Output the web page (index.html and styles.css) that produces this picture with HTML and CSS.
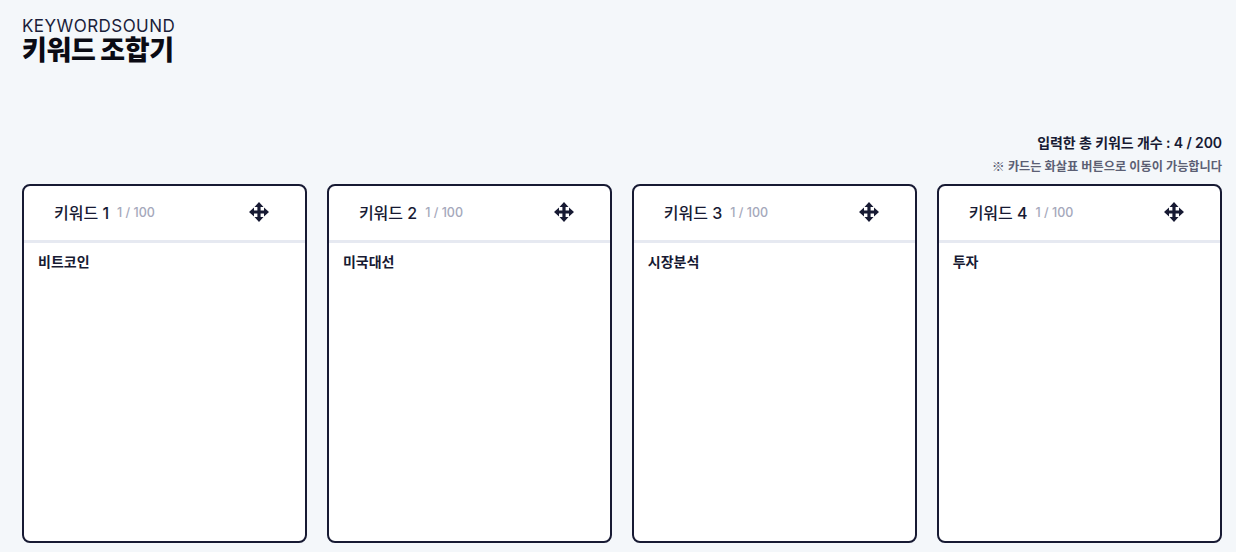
FILE: index.html
```html
<!DOCTYPE html>
<html lang="ko">
<head>
    <meta charset="UTF-8">
    <meta name="viewport" content="width=device-width, initial-scale=1.0">
    <title>키워드 조합기</title>
    <link rel="stylesheet" href="styles.css">
</head>
<body>
    <svg class="icon-defs" width="0" height="0">
        <symbol id="move" viewBox="0 0 20 20">
            <path d="M10 0 L14.5 5 H11.6 V8.4 H15 V5.5 L20 10 L15 14.5 V11.6 H11.6 V15 H14.5 L10 20 L5.5 15 H8.4 V11.6 H5 V14.5 L0 10 L5 5.5 V8.4 H8.4 V5 H5.5 Z"/>
        </symbol>
    </svg>
    <div class="header">
        <div class="brand">KEYWORDSOUND</div>
        <h1>키워드 조합기</h1>
    </div>
    <div class="summary">
        <p class="total">입력한 총 키워드 개수 : 4 / 200</p>
        <p class="hint"><span class="mark">※</span> 카드는 화살표 버튼으로 이동이 가능합니다</p>
    </div>
    <div class="cards">
        <div class="card">
            <div class="card-head">
                <span class="card-title">키워드 1</span>
                <span class="card-count">1 / 100</span>
                <button class="move-btn"><svg width="20" height="20"><use href="#move"/></svg></button>
            </div>
            <div class="card-body">비트코인</div>
        </div>
        <div class="card">
            <div class="card-head">
                <span class="card-title">키워드 2</span>
                <span class="card-count">1 / 100</span>
                <button class="move-btn"><svg width="20" height="20"><use href="#move"/></svg></button>
            </div>
            <div class="card-body">미국대선</div>
        </div>
        <div class="card">
            <div class="card-head">
                <span class="card-title">키워드 3</span>
                <span class="card-count">1 / 100</span>
                <button class="move-btn"><svg width="20" height="20"><use href="#move"/></svg></button>
            </div>
            <div class="card-body">시장분석</div>
        </div>
        <div class="card">
            <div class="card-head">
                <span class="card-title">키워드 4</span>
                <span class="card-count">1 / 100</span>
                <button class="move-btn"><svg width="20" height="20"><use href="#move"/></svg></button>
            </div>
            <div class="card-body">투자</div>
        </div>
    </div>
</body>
</html>
```

FILE: styles.css
```css
html, body {
    height: 100%;
}
body {
    font-family: 'Inter', 'Noto Sans CJK KR', sans-serif;
    background-color: #f4f7fa;
    color: #171a33;
    margin: 0;
    padding: 17px 14px 9px 22px;
    box-sizing: border-box;
    display: flex;
    flex-direction: column;
    overflow: hidden;
}
.icon-defs {
    position: absolute;
}
.header {
    height: 117px;
    flex-shrink: 0;
}
.brand {
    font-size: 17px;
    line-height: 18px;
    letter-spacing: 0.45px;
    color: #1b1e3a;
}
h1 {
    margin: 1px 0 0;
    font-size: 27px;
    line-height: 29px;
    font-weight: 900;
    letter-spacing: -0.4px;
    color: #0b0b14;
}
.summary {
    text-align: right;
    flex-shrink: 0;
}
.summary p {
    margin: 0;
}
.total {
    font-size: 14px;
    line-height: 18px;
    font-weight: 600;
    letter-spacing: -0.1px;
}
.summary .hint {
    margin-top: 6px;
    font-size: 12.2px;
    line-height: 18px;
    font-weight: 600;
    color: #5c5f74;
}
.mark {
    font-family: 'Noto Sans CJK KR', sans-serif;
    font-size: 13px;
    line-height: 1;
}
.cards {
    margin-top: 8px;
    flex: 1;
    display: grid;
    grid-template-columns: repeat(4, 1fr);
    gap: 19.5px;
}
.card {
    background: #fff;
    border: 2px solid #171a33;
    border-radius: 8px;
    display: flex;
    flex-direction: column;
}
.card-head {
    box-sizing: border-box;
    height: 57px;
    padding: 0 36px 2px 30px;
    border-bottom: 3px solid #e6e9f1;
    display: flex;
    align-items: center;
}
.card-title {
    font-size: 16px;
    font-weight: 500;
}
.card-count {
    margin-left: 8px;
    font-size: 12.5px;
    font-weight: 500;
    color: #a5a8bb;
}
.move-btn {
    margin-left: auto;
    padding: 0;
    background: none;
    border: none;
    height: 20px;
    color: #171a33;
    cursor: pointer;
}
.move-btn svg {
    display: block;
    fill: currentColor;
}
.card-body {
    padding: 10px 14px;
    font-size: 14px;
    line-height: 18px;
    font-weight: 600;
}
```
